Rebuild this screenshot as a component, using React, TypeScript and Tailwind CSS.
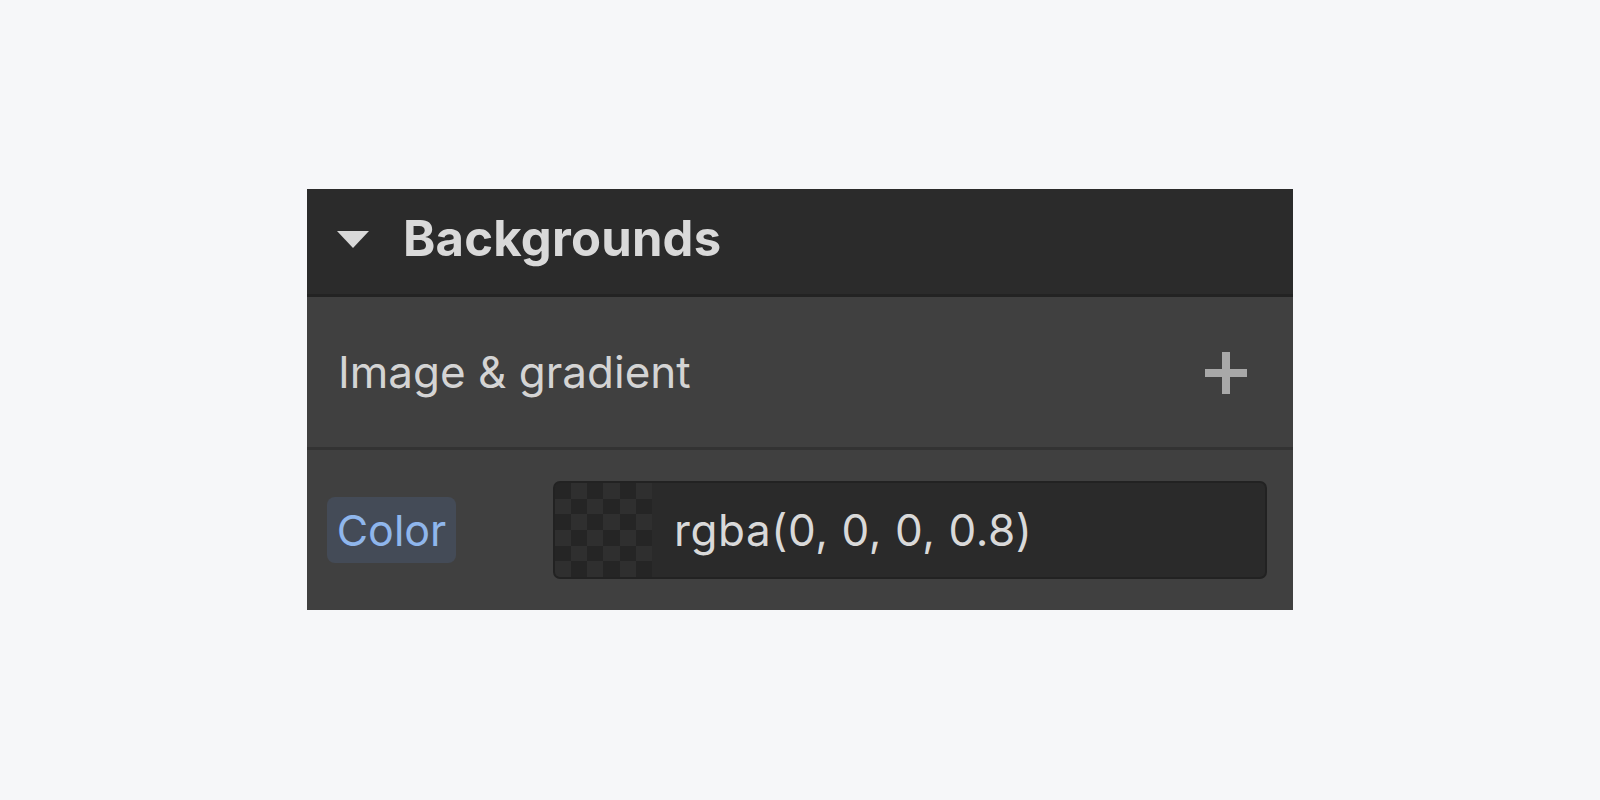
export default function App() {
  return (
    <div className="flex h-screen w-full items-center justify-center bg-[#f6f7f9] pb-[1px]" style={{ fontFamily: 'Inter, "Noto Sans", sans-serif' }}>
      <div className="flex w-[986px] flex-col bg-[#404040]">
        {/* header */}
        <div className="flex h-[108px] items-center border-b-[3px] border-[#232323] bg-[#2b2b2b] pb-[6px] pl-[30px]">
          <svg width="32" height="17" viewBox="0 0 32 17" className="mt-[2px]">
            <polygon points="0,0 32,0 16,17" fill="#d9d9d9" />
          </svg>
          <span className="ml-[34px] text-[49px] font-bold tracking-[0.2px] text-[#d9d9d9]">Backgrounds</span>
        </div>

        {/* image & gradient */}
        <div className="flex h-[153px] items-center justify-between border-b-[3px] border-[#333333] pl-[31px] pr-[46px]">
          <span className="text-[44px] text-[#d4d4d4]">Image &amp; gradient</span>
          <svg width="42" height="42" viewBox="0 0 42 42" className="mt-[2px]">
            <rect x="17" y="0" width="8" height="42" fill="#a8a8a8" />
            <rect x="0" y="17" width="42" height="8" fill="#a8a8a8" />
          </svg>
        </div>

        {/* color */}
        <div className="flex h-[160px] items-center pl-[20px] pr-[26px]">
          <div className="flex h-[66px] w-[129px] items-center justify-center rounded-[8px] bg-[#444b57]">
            <span className="text-[43px] text-[#8fb6ec]">Color</span>
          </div>
          <div className="ml-[97px] flex h-[98px] flex-1 overflow-hidden rounded-[7px] border-2 border-[#222222] bg-[#2a2a2a]">
            <div className="grid h-full w-[97px] grid-cols-6 grid-rows-6">
              {Array.from({ length: 36 }).map((_, i) => {
                const r = Math.floor(i / 6);
                const c = i % 6;
                return (
                  <div
                    key={i}
                    className={(r + c) % 2 === 0 ? 'bg-[#252525]' : 'bg-[#2f2f2f]'}
                  />
                );
              })}
            </div>
            <div className="flex items-center pl-[22px]">
              <span className="text-[44px] tracking-[0.6px] text-[#d9d9d9]">rgba(0, 0, 0, 0.8)</span>
            </div>
          </div>
        </div>
      </div>
    </div>
  );
}
